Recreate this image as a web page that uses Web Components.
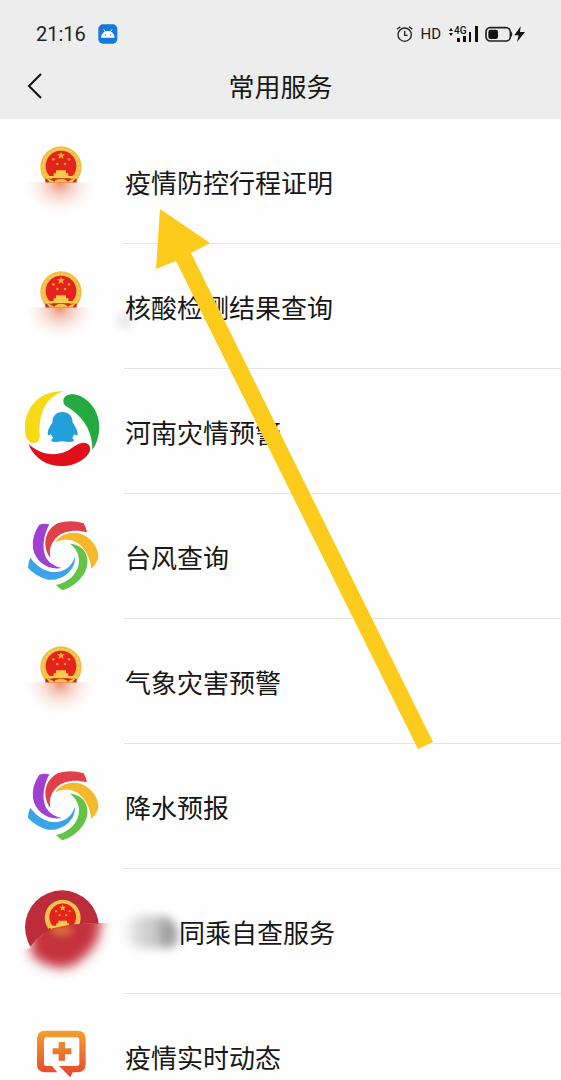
<!DOCTYPE html>
<html lang="zh-CN">
<head>
<meta charset="utf-8">
<meta name="viewport" content="width=device-width, initial-scale=1">
<title>常用服务</title>
<style>
  html, body {
    margin: 0;
    height: 100%;
  }
  body {
    background: #fefefe;
    color: #171717;
    font-family: "Noto Sans CJK SC", sans-serif;
  }
</style>
</head>
<body>

<services-page>
  <status-bar slot="top" time="21:16"></status-bar>
  <title-bar slot="top">常用服务</title-bar>
  <service-row icon="emblem">疫情防控行程证明</service-row>
  <service-row icon="emblem" smudge>核酸检测结果查询</service-row>
  <service-row icon="ring">河南灾情预警</service-row>
  <service-row icon="swirl">台风查询</service-row>
  <service-row icon="emblem">气象灾害预警</service-row>
  <service-row icon="swirl">降水预报</service-row>
  <service-row icon="badge" masked>同乘自查服务</service-row>
  <service-row icon="clinic">疫情实时动态</service-row>
  <pointer-arrow slot="overlay"></pointer-arrow>
</services-page>

<script>
// national emblem, shared by two icons
const EMBLEM = `
  <circle cx="153" cy="112" r="62" fill="#f0bd45"/>
  <circle cx="153" cy="112" r="54" fill="none" stroke="#f5cd58" stroke-width="5" stroke-dasharray="9 5"/>
  <circle cx="153" cy="109" r="46" fill="#e5231d"/>
  <path d="M153 66l3 8h9l-7 5 3 9-8-5-8 5 3-9-7-5h9z" fill="#f9b52f"/>
  <g fill="#f59a30"><circle cx="130" cy="89" r="4"/><circle cx="177" cy="89" r="4"/><circle cx="142" cy="103" r="4"/><circle cx="165" cy="103" r="4"/></g>
  <path d="M138 122h30v9h7v8h23v7h-90v-7h23v-8h7z" fill="#f6cb4c"/>
  <path d="M106 147h94v12h-94z" fill="#c52b1d"/>
  <path d="M108 145q15 4 30 14h-18zM198 145q-15 4-30 14h18zM134 153q19-12 38 0v6h-38z" fill="#f3c243"/>`;

const ICONS = {
  emblem: `<svg viewBox="42 34 228 240" aria-hidden="true">
    <defs>
      <clipPath id="top"><path d="M80 40h150v119H80z"/></clipPath>
      <radialGradient id="haze" cx=".5" cy=".5" r=".5">
        <stop offset="0" stop-color="#e9704c" stop-opacity=".75"/>
        <stop offset=".35" stop-color="#f0a48c" stop-opacity=".5"/>
        <stop offset=".7" stop-color="#f6d5cc" stop-opacity=".3"/>
        <stop offset="1" stop-color="#fbe9e4" stop-opacity="0"/>
      </radialGradient>
      <clipPath id="low"><path d="M40 158h230v120H40z"/></clipPath>
    </defs>
    <g clip-path="url(#top)">${EMBLEM}</g>
    <ellipse cx="150" cy="163" rx="106" ry="92" fill="url(#haze)" clip-path="url(#low)"/>
  </svg>`,

  ring: `<svg viewBox="42 47 228 240" aria-hidden="true">
    <path d="M160 48C98 44 49 88 45 150C44 178 49 196 64 202C82 207 90 196 89 180C86 145 92 97 124 68Q140 55 160 48Z" fill="#f6da16"/>
    <path d="M160 74C164 57 184 51 211 62C247 80 268 115 268 157Q267 194 247 224C248 178 229 133 179 99Q158 90 160 74Z" fill="#25aa42"/>
    <path d="M55 205C72 250 113 273 158 272C197 271 229 250 239 229C245 211 232 200 216 203C199 206 187 219 171 227C132 245 89 237 55 205Z" fill="#e1101b"/>
    <path d="M157 110C175 110 187 122 188 141C195 152 203 166 203 176C202 182 198 181 192 177Q190 185 186 188Q194 192 190 198Q182 202 158 198Q132 202 125 198Q121 192 130 188Q125 184 123 177Q113 183 113 175C113 163 120 152 127 142C128 121 139 110 157 110Z" fill="#23a0dc"/>
  </svg>`,

  swirl: `<svg viewBox="12 10 228 240" aria-hidden="true">
    <path fill="#df4049" d="M91 135C66 104 72 50 115 31Q152 20 191 32Q198 44 201 59C168 50 130 53 107 77Q84 104 91 135Z"/>
    <path fill="#f6b92c" d="M106 89C122 60 172 48 206 77C232 98 240 130 232 144Q225 158 214 169C212 138 196 108 172 90Q140 72 106 89Z"/>
    <path fill="#63c347" d="M150 93C198 96 216 142 192 184Q168 220 128 233Q116 226 108 217C140 210 167 190 175 160Q184 120 150 93Z"/>
    <path fill="#3ba4e8" d="M165 133C167 174 125 206 84 201Q50 193 24 166Q24 148 31 135C50 162 80 181 110 178Q150 174 165 133Z"/>
    <path fill="#a040d2" d="M126 166C83 174 46 147 39 107Q34 70 58 36Q72 31 88 35C70 70 65 105 78 135Q94 160 126 166Z"/>
  </svg>`,

  badge: `<svg viewBox="72 63 228 240" aria-hidden="true">
    <defs>
      <clipPath id="disc"><path d="M60 50H310V162Q250 156 180 172Q120 187 90 232H60Z"/></clipPath>
      <filter id="soft" x="-40%" y="-60%" width="180%" height="220%"><feGaussianBlur stdDeviation="17"/></filter>
      <filter id="glow" x="-80%" y="-100%" width="260%" height="300%"><feGaussianBlur stdDeviation="10"/></filter>
      <clipPath id="under"><path d="M60 236H88Q120 185 180 170Q250 154 380 162V370H60Z"/></clipPath>
    </defs>
    <g clip-path="url(#disc)">
      <circle cx="186" cy="172" r="111" fill="#bd2c3b"/>
      <g transform="translate(55 46) scale(.87)">${EMBLEM}</g>
    </g>
    <g clip-path="url(#under)">
      <path d="M92 130H304Q304 215 268 245Q228 294 180 294Q130 288 94 256Z" fill="#c4303e" filter="url(#soft)"/>
      <ellipse cx="186" cy="182" rx="34" ry="16" fill="#e07a3c" opacity=".8" filter="url(#glow)"/>
    </g>
  </svg>`,

  clinic: `<svg viewBox="42 18 228 240" aria-hidden="true">
    <defs><linearGradient id="warm" x1="0" y1="62" x2="0" y2="202" gradientUnits="userSpaceOnUse">
      <stop offset="0" stop-color="#f2a02e"/><stop offset="1" stop-color="#e7432c"/>
    </linearGradient></defs>
    <path fill="url(#warm)" fill-rule="evenodd" d="M106 62H202Q227 62 227 87V162Q227 187 202 187H188L181 202L147 168H200Q208 168 208 160V91Q208 82 200 82H110Q102 82 102 91V160Q102 168 110 168H126L142 187H106Q81 187 81 162V87Q81 62 106 62Z"/>
    <path fill="url(#warm)" d="M146 96h19v19h19v18h-19v19h-19v-19h-18v-18h18z"/>
  </svg>`
};

class ServicesPage extends HTMLElement {
  constructor() {
    super();
    this.attachShadow({ mode: 'open' });
  }

  connectedCallback() {
    this.shadowRoot.innerHTML = `
      <style>
        :host {
          display: flex;
          flex-direction: column;
          height: 100%;
          position: relative;
          overflow: hidden;
        }
        header {
          flex: none;
          background: #ededed;
        }
        main {
          flex: 1;
          min-height: 0;
          overflow-y: auto;
          scrollbar-width: none;
        }
      </style>
      <header><slot name="top"></slot></header>
      <main><slot></slot></main>
      <slot name="overlay"></slot>`;
  }
}

class StatusBar extends HTMLElement {
  constructor() {
    super();
    this.attachShadow({ mode: 'open' });
  }

  connectedCallback() {
    this.shadowRoot.innerHTML = `
      <style>
        :host {
          display: flex;
          align-items: center;
          justify-content: space-between;
          height: 36px;
          padding: 16px 36px 0 36px;
          font-family: Roboto, sans-serif;
          color: #222;
        }
        div {
          display: flex;
          align-items: center;
        }
        .left { gap: 12px; font-size: 20px; line-height: 24px; }
        .right { gap: 7px; font-size: 15px; line-height: 20px; }
        svg { display: block; }
        .signal text { font: 500 10px Roboto, sans-serif; }
      </style>
      <div class="left">
        <span>${this.getAttribute('time')}</span>
        <svg width="20" height="20" viewBox="0 0 60 60" aria-hidden="true">
          <rect x="1" y="1" width="57" height="58" rx="14" fill="#1479d8"/>
          <path d="M17 16l6 9M42 16l-6 9" stroke="#fff" stroke-width="3"/>
          <path d="M9 41Q11 22 30 21Q48 22 50 41Z" fill="#fff"/>
          <circle cx="22" cy="33" r="2" fill="#1479d8"/><circle cx="38" cy="33" r="2" fill="#1479d8"/>
        </svg>
      </div>
      <div class="right">
        <svg width="17" height="18" viewBox="0 0 51 54" fill="none" stroke="#222" stroke-width="4" aria-hidden="true">
          <circle cx="26" cy="29" r="20"/><path d="M3 13l10-8M49 13L39 5M26 17v14h9"/>
        </svg>
        <span>HD</span>
        <svg class="signal" width="30" height="18" viewBox="0 0 30 18" fill="#111" aria-hidden="true">
          <path d="M1 6l2-3 2 3zM1 8l2 3 2-3z"/>
          <text x="6" y="9">4G</text>
          <path d="M9 13h3v4h-3zM15 11h3v6h-3zM21 7h2v10h-2zM27 1h3v16h-3z"/>
        </svg>
        <svg width="40" height="18" viewBox="0 0 120 54" aria-hidden="true">
          <rect x="3" y="8" width="73" height="40" rx="13" fill="none" stroke="#222" stroke-width="5"/>
          <rect x="10" y="14" width="29" height="28" rx="7" fill="#111"/>
          <path d="M77 21q6 7 0 14" stroke="#222" stroke-width="4" fill="none"/>
          <path d="M107 4L88 31h13l-5 20 24-30h-15z" fill="#111"/>
        </svg>
      </div>`;
  }
}

class TitleBar extends HTMLElement {
  constructor() {
    super();
    this.attachShadow({ mode: 'open' });
  }

  connectedCallback() {
    this.shadowRoot.innerHTML = `
      <style>
        :host {
          display: grid;
          grid-template-columns: 72px 1fr 72px;
          align-items: center;
          height: 67px;
        }
        button {
          display: flex;
          align-items: center;
          height: 64px;
          padding: 0 0 0 26px;
          border: 0;
          background: none;
        }
        h1 {
          margin: 0;
          text-align: center;
          font-size: 26px;
          font-weight: 400;
          line-height: 40px;
        }
      </style>
      <button type="button" aria-label="返回">
        <svg width="18" height="28" viewBox="0 0 18 28" fill="none" stroke="#111" stroke-width="2" aria-hidden="true">
          <path d="M15 2L3 14l12 12"/>
        </svg>
      </button>
      <h1><slot></slot></h1>`;
  }
}

class ServiceRow extends HTMLElement {
  constructor() {
    super();
    this.attachShadow({ mode: 'open' });
  }

  connectedCallback() {
    this.shadowRoot.innerHTML = `
      <style>
        :host {
          display: block;
        }
        a {
          display: flex;
          align-items: center;
          gap: 24px;
          padding-left: 24px;
          color: inherit;
          text-decoration: none;
        }
        .icon {
          flex: none;
          width: 76px;
          height: 80px;
          margin-bottom: 2px;
        }
        .icon svg {
          display: block;
          overflow: visible;
        }
        .label {
          flex: 1;
          display: flex;
          align-items: center;
          position: relative;
          box-sizing: border-box;
          height: 125px;
          padding: 2px 0 0 1px;
          border-bottom: 1px solid #e6e6e6;
          font-size: 26px;
          line-height: 40px;
          white-space: nowrap;
        }
        .mask {
          width: 54px;
          height: 32px;
          border-radius: 16px 20px 12px 16px;
          background: linear-gradient(90deg, #f4f4f4, #d2d2d2 35%, #cacaca 55%, #959595 82%, #bcbcbc);
          filter: blur(5px);
        }
        .smudge {
          position: absolute;
          left: -6px;
          top: 68px;
          width: 14px;
          height: 16px;
          background: #e6e6e6;
          border-radius: 8px;
          filter: blur(4px);
        }
        .text { position: relative; }
      </style>
      <a href="#">
        <span class="icon">${ICONS[this.getAttribute('icon')]}</span>
        <span class="label">
          ${this.hasAttribute('smudge') ? '<span class="smudge"></span>' : ''}
          ${this.hasAttribute('masked') ? '<span class="mask"></span>' : ''}
          <span class="text"><slot></slot></span>
        </span>
      </a>`;
  }
}

class PointerArrow extends HTMLElement {
  constructor() {
    super();
    this.attachShadow({ mode: 'open' });
  }

  connectedCallback() {
    this.shadowRoot.innerHTML = `
      <style>
        :host {
          display: block;
          position: absolute;
          left: 156px;
          top: 209px;
          pointer-events: none;
        }
        svg { display: block; }
      </style>
      <svg width="278" height="542" viewBox="156 209 278 542" aria-hidden="true">
        <path d="M160 209L210 243L191 253L433 742L418 749L176 261L156 269Z" fill="#fdcb1b"/>
      </svg>`;
  }
}

customElements.define('services-page', ServicesPage);
customElements.define('status-bar', StatusBar);
customElements.define('title-bar', TitleBar);
customElements.define('service-row', ServiceRow);
customElements.define('pointer-arrow', PointerArrow);
</script>
</body>
</html>
